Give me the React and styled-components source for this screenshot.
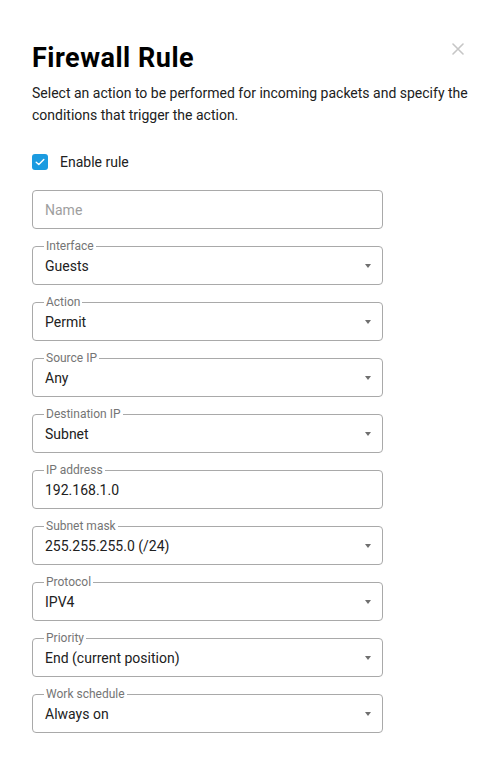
import styled, { createGlobalStyle } from 'styled-components'

const GlobalStyle = createGlobalStyle`
  html, body {
    margin: 0;
    padding: 0;
    background: #fff;
  }
  body {
    font-family: Roboto, 'Liberation Sans', sans-serif;
    color: #212121;
  }
`

const fields = [
  { label: 'Interface', value: 'Guests', select: true },
  { label: 'Action', value: 'Permit', select: true },
  { label: 'Source IP', value: 'Any', select: true },
  { label: 'Destination IP', value: 'Subnet', select: true },
  { label: 'IP address', value: '192.168.1.0' },
  { label: 'Subnet mask', value: '255.255.255.0 (/24)', select: true },
  { label: 'Protocol', value: 'IPV4', select: true },
  { label: 'Priority', value: 'End (current position)', select: true },
  { label: 'Work schedule', value: 'Always on', select: true },
]

export default function App() {
  return (
    <>
      <GlobalStyle />
      <Dialog>
        <Header>
          <Title>Firewall Rule</Title>
          <CloseButton aria-label="Close">
            <svg width="12" height="12" viewBox="0 0 12 12">
              <path
                d="M1 1L11 11M11 1L1 11"
                stroke="#c6c6c6"
                strokeWidth="1.6"
                strokeLinecap="round"
              />
            </svg>
          </CloseButton>
        </Header>
        <Description>
          Select an action to be performed for incoming packets and specify the
          conditions that trigger the action.
        </Description>

        <CheckRow>
          <CheckBox>
            <svg width="10" height="8" viewBox="0 0 10 8">
              <path
                d="M1.2 4.2L3.8 6.6L8.8 1.4"
                fill="none"
                stroke="#fff"
                strokeWidth="1.4"
                strokeLinecap="round"
                strokeLinejoin="round"
              />
            </svg>
          </CheckBox>
          <span>Enable rule</span>
        </CheckRow>

        <Form>
          <Field>
            <Value $placeholder>Name</Value>
          </Field>
          {fields.map(({ label, value, select }) => (
            <Field key={label}>
              <Legend>{label}</Legend>
              <Value>{value}</Value>
              {select && <Caret />}
            </Field>
          ))}
        </Form>
      </Dialog>
    </>
  )
}

const Dialog = styled.div`
  width: 500px;
  box-sizing: border-box;
  padding: 42px 28px 32px 32px;
`

const Header = styled.div`
  display: flex;
  justify-content: space-between;
  align-items: flex-start;
`

const Title = styled.h1`
  margin: 0;
  font-size: 27px;
  line-height: 32px;
  font-weight: 700;
  color: #000;
  letter-spacing: 0.5px;
`

const CloseButton = styled.button`
  display: flex;
  align-items: center;
  justify-content: center;
  width: 20px;
  height: 20px;
  margin: -3px 4px 0 0;
  padding: 0;
  border: none;
  background: none;
  cursor: pointer;
`

const Description = styled.p`
  margin: 8px 0 0;
  font-size: 14px;
  line-height: 22px;
  color: #212121;
`

const CheckRow = styled.label`
  display: flex;
  align-items: center;
  gap: 12px;
  margin-top: 26px;
  font-size: 14px;
  line-height: 20px;
  color: #212121;
`

const CheckBox = styled.span`
  display: flex;
  align-items: center;
  justify-content: center;
  width: 16px;
  height: 16px;
  border-radius: 3px;
  background: #1b9be0;
`

const Form = styled.div`
  display: flex;
  flex-direction: column;
  gap: 17px;
  width: 351px;
  margin-top: 18px;
`

const Field = styled.div`
  position: relative;
  display: flex;
  align-items: center;
  height: 39px;
  box-sizing: border-box;
  padding: 0 12px;
  border: 1px solid #a9a9a9;
  border-radius: 4px;
`

const Legend = styled.span`
  position: absolute;
  top: -8px;
  left: 11px;
  padding: 0 2px;
  background: #fff;
  font-size: 12px;
  line-height: 14px;
  color: #757575;
`

const Value = styled.span`
  flex: 1;
  font-size: 14px;
  color: ${(p) => (p.$placeholder ? '#9e9e9e' : '#212121')};
`

const Caret = styled.span`
  width: 0;
  height: 0;
  margin-right: -1px;
  border-left: 3px solid transparent;
  border-right: 3px solid transparent;
  border-top: 4px solid #6f6f6f;
`
